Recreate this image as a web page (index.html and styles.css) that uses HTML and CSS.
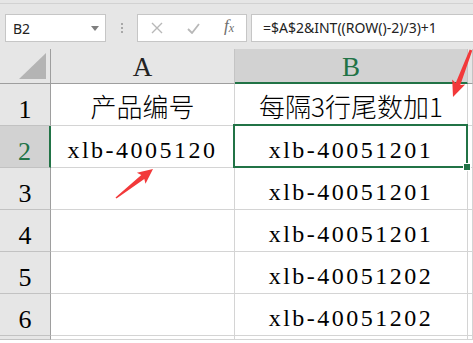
FILE: index.html
```html
<!DOCTYPE html>
<html lang="zh-CN">
<head>
  <meta charset="UTF-8" />
  <title>Sheet</title>
  <link rel="stylesheet" href="styles.css">
</head>
<body>

<div class="toolbar">
  <div class="bar">
    <div class="namebox">
      <span>B2</span>
      <svg width="8" height="5" viewBox="0 0 8 5"><path d="M0 0h8L4 5z" fill="#7f7f7f"/></svg>
    </div>
    <div class="grip"><i></i><i></i><i></i></div>
    <div class="fxbox">
      <svg width="12" height="12" viewBox="0 0 12 12"><path d="M1 1l10 10M11 1L1 11" stroke="#b8b8b8" stroke-width="1.4" fill="none"/></svg>
      <svg width="13" height="11" viewBox="0 0 13 11"><path d="M1 6l4 4 7-9" stroke="#b8b8b8" stroke-width="1.8" fill="none"/></svg>
      <span class="fx">f<sub>x</sub></span>
    </div>
    <div class="formula">=$A$2&amp;INT((ROW()-2)/3)+1</div>
  </div>
</div>

<div class="sheet">
  <div class="c h corner">
    <svg width="27" height="26" viewBox="0 0 27 26"><path d="M27 0v26H0z" fill="#b4b4b4"/></svg>
  </div>
  <div class="c h">A</div>
  <div class="c h sel">B</div>
  <div class="c h"></div>

  <div class="c r">1</div>
  <div class="c cjk">产品编号</div>
  <div class="c cjk">每隔3行尾数加1</div>
  <div class="c"></div>

  <div class="c r sel">2</div>
  <div class="c v">xlb-4005120</div>
  <div class="c v active">xlb-40051201</div>
  <div class="c"></div>

  <div class="c r">3</div>
  <div class="c"></div>
  <div class="c v">xlb-40051201</div>
  <div class="c"></div>

  <div class="c r">4</div>
  <div class="c"></div>
  <div class="c v">xlb-40051201</div>
  <div class="c"></div>

  <div class="c r">5</div>
  <div class="c"></div>
  <div class="c v">xlb-40051202</div>
  <div class="c"></div>

  <div class="c r">6</div>
  <div class="c"></div>
  <div class="c v">xlb-40051202</div>
  <div class="c"></div>

  <div class="c r"></div>
  <div class="c"></div>
  <div class="c"></div>
  <div class="c"></div>
</div>

<!-- red pointer arrows drawn over the sheet -->
<svg class="arrows" width="473" height="343" viewBox="0 0 473 343">
  <polygon fill="#f2393a" points="116.5,198.6 144.3,179.1 145.5,183.8 153,169 136.9,172.8 141.3,175.1 115.5,197.4"/>
  <polygon fill="#f2393a" points="472.3,50.4 460.3,84.9 465.2,84.6 453,97 452.2,79.6 455.7,83.1 469.7,49.6"/>
</svg>

</body>
</html>
```

FILE: styles.css
```css
body {
  margin: 0;
  background: #fff;
  font-family: "Liberation Serif", serif;
  overflow: hidden;
  position: relative;
}
.toolbar {
  background: #e6e6e6;
  padding-top: 3px;
  height: 49px;
  box-sizing: border-box;
}
.bar {
  border-top: 1px solid #d2d2d2;
  display: flex;
  padding-top: 10px;
}
.namebox {
  margin-left: 5px;
  width: 101px;
  height: 28px;
  box-sizing: border-box;
  border: 1px solid #c6c6c6;
  background: #fff;
  display: flex;
  align-items: center;
  justify-content: space-between;
  padding: 0 6px 0 7px;
  font: 14px "Noto Sans", sans-serif;
  color: #222;
}
.grip {
  width: 2px;
  margin: 0 14px 0 15px;
  display: flex;
  flex-direction: column;
  justify-content: center;
  gap: 2px;
}
.grip i {
  width: 2px;
  height: 2px;
  background: #a8a8a8;
}
.fxbox {
  width: 110px;
  height: 28px;
  box-sizing: border-box;
  border: 1px solid #c6c6c6;
  background: #fff;
  display: flex;
  align-items: center;
  justify-content: space-between;
  padding: 0 12px 0 13px;
}
.fx {
  font: italic 17px "Liberation Serif", serif;
  color: #6e6e6e;
  margin-top: -4px;
}
.fx sub {
  font-size: 12px;
  vertical-align: -1px;
}
.formula {
  flex: 1;
  margin-left: 4px;
  height: 28px;
  box-sizing: border-box;
  border: 1px solid #c6c6c6;
  border-right: none;
  background: #fff;
  padding-left: 11px;
  font: 14px "Noto Sans", sans-serif;
  line-height: 26px;
  color: #222;
  white-space: nowrap;
}

.sheet {
  display: grid;
  grid-template-columns: 51px 184px 233px 1fr;
  grid-template-rows: 35px repeat(6, 42px) 4px;
}
.c {
  box-sizing: border-box;
  border-right: 1px solid #d4d4d4;
  border-bottom: 1px solid #d4d4d4;
  display: flex;
  align-items: flex-end;
  justify-content: center;
  color: #000;
  line-height: 1;
}
.h {
  background: #e6e6e6;
  border-bottom-color: #9e9e9e;
  border-right-color: #c4c4c4;
  font-size: 27px;
  padding-bottom: 2px;
  color: #222;
}
.corner {
  border-right-color: #9e9e9e;
  justify-content: flex-end;
  padding: 0 4px 4px 0;
}
.r {
  background: #e6e6e6;
  border-right-color: #9e9e9e;
  border-bottom-color: #c2c2c2;
  font-size: 26px;
  padding-bottom: 2px;
}
.h.sel {
  background: #d2d2d2;
  border-bottom: 2px solid #217346;
  color: #217346;
  padding-bottom: 1px;
}
.r.sel {
  background: #d2d2d2;
  border-right: 2px solid #217346;
  color: #217346;
}
.v {
  font-size: 24px;
  letter-spacing: 2.5px;
  padding-bottom: 5px;
}
.cjk {
  font-family: "Noto Sans CJK SC", sans-serif;
  font-size: 26px;
  font-weight: 300;
  padding-bottom: 6px;
}
.active {
  position: relative;
}
.active::after {
  content: "";
  position: absolute;
  left: -2px;
  top: -2px;
  right: -1px;
  bottom: -1px;
  border: 2px solid #217346;
  z-index: 1;
}
.active::before {
  content: "";
  position: absolute;
  right: -4px;
  bottom: -4px;
  width: 6px;
  height: 6px;
  background: #217346;
  border: 1px solid #fff;
  z-index: 2;
}
.arrows {
  position: absolute;
  left: 0;
  top: 0;
  pointer-events: none;
  z-index: 5;
}
```
